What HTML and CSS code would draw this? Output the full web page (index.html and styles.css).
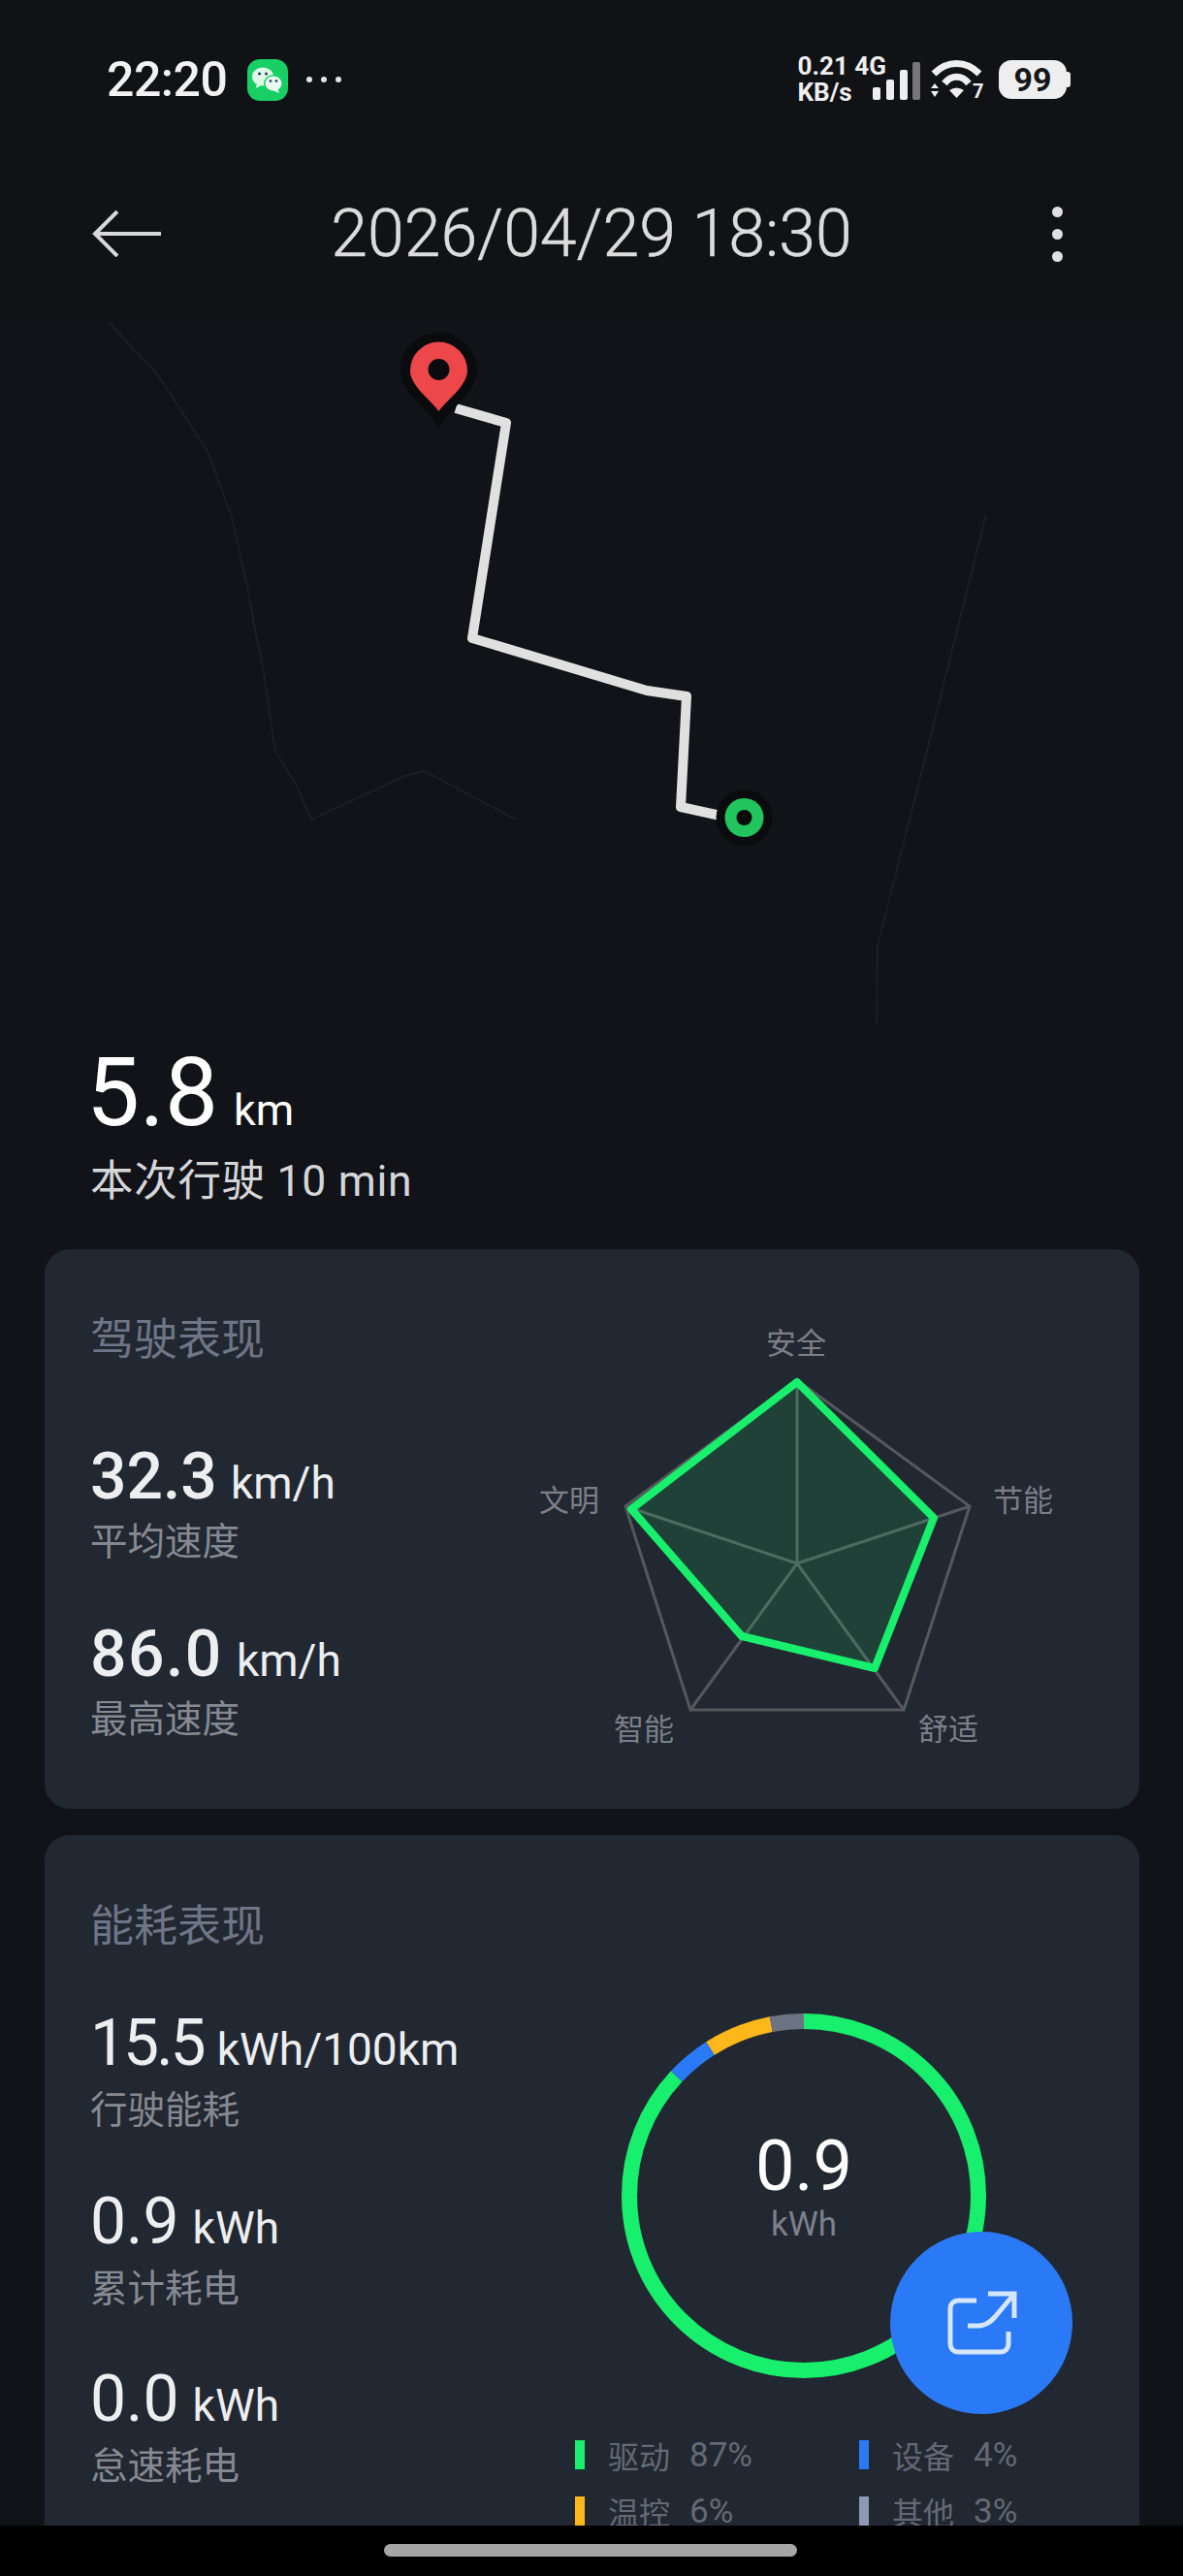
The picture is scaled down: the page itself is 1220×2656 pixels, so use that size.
FILE: index.html
```html
<!DOCTYPE html>
<html lang="zh-CN">
<head>
    <meta charset="UTF-8">
    <meta name="viewport" content="width=device-width, initial-scale=1.0">
    <title>行程详情</title>
    <link rel="stylesheet" href="styles.css">
</head>
<body>
    <div id="screen">
        <div class="status-bar">
            <div class="status-left">
                <span class="clock">22:20</span>
                <svg class="wechat" viewBox="0 0 42 43">
                    <rect width="42" height="43" rx="13" fill="#17cf65"/>
                    <ellipse cx="16" cy="18" rx="11" ry="9.5" fill="#dff8e6"/>
                    <path d="M10 24 L9 30 L16 26Z" fill="#dff8e6"/>
                    <ellipse cx="27" cy="25" rx="10" ry="9" fill="#17cf65"/>
                    <ellipse cx="27" cy="25" rx="8.5" ry="7.5" fill="#e9fbee"/>
                    <path d="M31 30 L33 35 L26 32Z" fill="#e9fbee"/>
                    <circle cx="12.5" cy="15" r="1.5" fill="#235"/>
                    <circle cx="19.5" cy="15" r="1.5" fill="#235"/>
                    <circle cx="24" cy="22.5" r="1.3" fill="#235"/>
                    <circle cx="30" cy="22.5" r="1.3" fill="#235"/>
                </svg>
                <span class="more-dots"><i></i><i></i><i></i></span>
            </div>
            <div class="status-right">
                <div class="net">0.21 4G<br>KB/s</div>
                <svg class="signal" viewBox="0 0 50 39">
                    <rect x="0" y="26" width="8" height="13" rx="2" fill="#eee"/>
                    <rect x="14" y="18" width="8" height="21" rx="2" fill="#eee"/>
                    <rect x="28" y="8" width="8" height="31" rx="2" fill="#eee"/>
                    <rect x="41" y="0" width="8" height="39" rx="2" fill="#777"/>
                </svg>
                <svg class="wifi" viewBox="0 -4 56 48">
                    <path d="M3 14 C17 0 36 0 50 14" fill="none" stroke="#eee" stroke-width="7"/>
                    <path d="M14 24 C21 15 32 15 39 24" fill="none" stroke="#eee" stroke-width="7"/>
                    <path d="M19 31 Q26.500 26 34 31 L26.500 39Z" fill="#eee"/>
                    <path d="M0 29 L4 24 L8 29Z M0 32 H8 L4 38Z" fill="#eee"/>
                    <text x="43" y="39" class="wifi-num">7</text>
                </svg>
                <div class="battery">99</div>
            </div>
        </div>

        <div class="top-bar">
            <svg class="back" viewBox="0 0 71 48">
                <path d="M71 24 H3 M26 1 L3 24 L26 47" fill="none" stroke="#d8d8d8" stroke-width="4"/>
            </svg>
            <div class="top-title">2026/04/29 18:30</div>
            <div class="menu-dots"><i></i><i></i><i></i></div>
        </div>

        <svg class="map" viewBox="0 332 1220 745">
            <path class="road" d="M112 332 L163 387 L214 465 L239 533 L255 605 L265 660 L268 670 L272 694 L283 768 L284 775 L306 810 L321 845 L418 800 L438 795 L532 845"/>
            <path class="road" d="M1017 530 L957 770 L905 975 L904 1056"/>
            <path class="route" d="M470 421 L522 436 L487 658 L667 712 L708 718 L702 832 L743 841"/>
            <path class="pin" d="M452.500 424 C445 413 423 398 423 382 A29.500 29.500 0 0 1 482 382 C482 398 460 413 452.500 424Z"/>
            <circle cx="452.500" cy="381" r="11" fill="#0a0b0d"/>
            <circle cx="767.500" cy="843" r="29" fill="#0a0b0d"/>
            <circle cx="767.500" cy="843" r="20" fill="#22c45e"/>
            <circle cx="767.500" cy="843" r="8" fill="#0a0b0d"/>
        </svg>

        <div class="summary">
            <div class="distance">5.8<span class="unit">km</span></div>
            <div class="duration">本次行驶 10 min</div>
        </div>

        <div class="card">
            <div class="col-left">
                <div class="card-title">驾驶表现</div>
                <div class="stats drive-stats">
                    <div class="stat">
                        <div class="value medium">32.3<span class="unit">km/h</span></div>
                        <div class="label">平均速度</div>
                    </div>
                    <div class="stat">
                        <div class="value medium"><span class="wide">86.0</span><span class="unit">km/h</span></div>
                        <div class="label">最高速度</div>
                    </div>
                </div>
            </div>
            <svg class="radar" viewBox="530 1352 600 460">
                <g class="radar-grid">
                    <path d="M822 1423 L1000 1553 L932 1763 L712 1763 L645 1553Z"/>
                    <path d="M822 1612 L822 1423 M822 1612 L1000 1553 M822 1612 L932 1763 M822 1612 L712 1763 M822 1612 L645 1553"/>
                </g>
                <path class="radar-value" d="M822 1425 L963 1565 L902 1720 L765 1687 L651 1556Z"/>
                <g class="radar-label">
                    <text x="821" y="1396">安全</text>
                    <text x="1055" y="1558">节能</text>
                    <text x="978" y="1794">舒适</text>
                    <text x="664" y="1794">智能</text>
                    <text x="587" y="1558">文明</text>
                </g>
            </svg>
        </div>

        <div class="card energy">
            <div class="col-left">
                <div class="card-title">能耗表现</div>
                <div class="stats energy-stats">
                    <div class="stat">
                        <div class="value"><span class="tight">15.5</span><span class="unit">kWh/100km</span></div>
                        <div class="label">行驶能耗</div>
                    </div>
                    <div class="stat">
                        <div class="value">0.9<span class="unit">kWh</span></div>
                        <div class="label">累计耗电</div>
                    </div>
                    <div class="stat">
                        <div class="value">0.0<span class="unit">kWh</span></div>
                        <div class="label">怠速耗电</div>
                    </div>
                </div>
            </div>
            <div class="col-right">
                <svg class="donut" viewBox="0 0 376 376">
                    <g fill="none" stroke-width="16" transform="rotate(-90 188 188)">
                        <circle cx="188" cy="188" r="180" pathLength="100" stroke="#18ef6c" stroke-dasharray="87 13"/>
                        <circle cx="188" cy="188" r="180" pathLength="100" stroke="#2a79f6" stroke-dasharray="4 96" stroke-dashoffset="-87"/>
                        <circle cx="188" cy="188" r="180" pathLength="100" stroke="#fdb71a" stroke-dasharray="6 94" stroke-dashoffset="-91"/>
                        <circle cx="188" cy="188" r="180" pathLength="100" stroke="#6b7483" stroke-dasharray="3 97" stroke-dashoffset="-97"/>
                    </g>
                    <text class="donut-num" x="188" y="182">0.9</text>
                    <text class="donut-unit" x="188" y="229">kWh</text>
                </svg>
                <div class="legend">
                    <div class="legend-item"><i class="green"></i><span>驱动</span><span class="pct">87%</span></div>
                    <div class="legend-item"><i class="blue"></i><span>设备</span><span class="pct">4%</span></div>
                    <div class="legend-item"><i class="amber"></i><span>温控</span><span class="pct">6%</span></div>
                    <div class="legend-item"><i class="grey"></i><span>其他</span><span class="pct">3%</span></div>
                </div>
            </div>
        </div>

        <div class="fab">
            <svg viewBox="0 0 188 188" fill="none" stroke="#d6e6ff" stroke-width="5">
                <path d="M89 71 H70 a8 8 0 0 0 -8 8 V116 a8 8 0 0 0 8 8 H114 a8 8 0 0 0 8 -8 V103"/>
                <path d="M101 64 H128 V89"/>
                <path d="M128 64 L108 88 Q101 96 92 97 H80"/>
            </svg>
        </div>

        <div class="nav-bar"><div class="handle"></div></div>
    </div>
</body>
</html>
```

FILE: styles.css
```css
body {
    margin: 0;
    background: #111318;
    font-family: 'Roboto', 'Noto Sans CJK SC', sans-serif;
    color: #fff;
}
#screen {
    position: relative;
    width: 1220px;
    height: 2656px;
    overflow: hidden;
    background: #111318;
}
.status-bar {
    display: flex;
    justify-content: space-between;
    align-items: center;
    height: 164px;
    padding: 0 116px 0 110px;
    box-sizing: border-box;
    background: #101216;
}
.status-left, .status-right {
    display: flex;
    align-items: center;
}
.clock {
    font-size: 50px;
    font-weight: 500;
    color: #f2f2f2;
    letter-spacing: -0.5px;
}
.wechat {
    width: 42px;
    height: 43px;
    margin-left: 21px;
}
.more-dots {
    display: flex;
    gap: 9px;
    margin-left: 19px;
}
.more-dots i {
    width: 6px;
    height: 6px;
    border-radius: 50%;
    background: #e4e4e4;
}
.net {
    font-size: 26px;
    font-weight: 700;
    line-height: 27px;
    color: #eee;
    white-space: nowrap;
}
.signal {
    width: 50px;
    height: 39px;
    margin-left: -14px;
    margin-top: 2px;
}
.wifi {
    width: 56px;
    height: 48px;
    margin-left: 10px;
}
.wifi-num {
    font-size: 20px;
    font-weight: 700;
    fill: #eee;
}
.battery {
    position: relative;
    width: 70px;
    height: 40px;
    margin-left: 14px;
    margin-right: 4px;
    border-radius: 13px;
    background: #eee;
    color: #14161a;
    font-size: 34px;
    font-weight: 700;
    line-height: 40px;
    text-align: center;
}
.battery::after {
    content: "";
    position: absolute;
    left: 70px;
    top: 12px;
    width: 4px;
    height: 16px;
    border-radius: 0 3px 3px 0;
    background: #eee;
}
.top-bar {
    display: grid;
    grid-template-columns: 1fr auto 1fr;
    align-items: center;
    height: 168px;
    padding: 0 95px 14px 95px;
    box-sizing: border-box;
    background: #101216;
}
.back {
    width: 71px;
    height: 48px;
}
.top-title {
    font-size: 68px;
    font-weight: 300;
    color: #dcdcdc;
    white-space: nowrap;
    -webkit-text-stroke: 0.5px #dcdcdc;
}
.menu-dots {
    justify-self: end;
    display: flex;
    flex-direction: column;
    gap: 12px;
    margin-right: 29px;
}
.menu-dots i {
    width: 11px;
    height: 11px;
    border-radius: 50%;
    background: #e0e0e0;
}
.map {
    display: block;
    width: 1220px;
    height: 745px;
}
.road {
    fill: none;
    stroke: #1b1e23;
    stroke-width: 2;
}
.route {
    fill: none;
    stroke: #e0e0e0;
    stroke-width: 10;
    stroke-linejoin: round;
}
.pin {
    fill: #ee474a;
    stroke: #0a0b0d;
    stroke-width: 20;
    paint-order: stroke;
}
.summary {
    padding-left: 89px;
    height: 211px;
}
.distance {
    font-size: 98px;
    line-height: 100px;
    font-weight: 400;
}
.distance .unit {
    font-size: 45px;
    line-height: 1;
    margin-left: 16px;
}
.duration {
    margin-top: 13px;
    padding-left: 4px;
    font-size: 44.500px;
    line-height: 56px;
    font-weight: 400;
    letter-spacing: 0.7px;
    color: #d5d6d8;
}
.card {
    display: flex;
    margin: 0 45px 27px 46px;
    height: 577px;
    padding: 64px 0 0 47px;
    box-sizing: border-box;
    border-radius: 26px;
    background: #222831;
}
.energy {
    height: 800px;
    margin-bottom: 0;
    padding-top: 65px;
}
.col-left {
    flex: 0 0 437px;
}
.card-title {
    font-size: 45px;
    line-height: 60px;
    color: #6e7587;
}
.drive-stats {
    margin-top: 73px;
    display: flex;
    flex-direction: column;
    gap: 53px;
}
.drive-stats .label {
    margin-top: 4px;
}
.drive-stats .unit {
    font-size: 45px;
    margin-left: 12px;
}
.energy-stats {
    margin-top: 52px;
    display: flex;
    flex-direction: column;
    gap: 51.500px;
}
.value {
    font-size: 66px;
    line-height: 76px;
    font-weight: 400;
    color: #eceef0;
    white-space: nowrap;
}
.value.medium {
    font-weight: 500;
}
.value .unit {
    font-size: 46px;
    line-height: 1;
    font-weight: 400;
    margin-left: 14px;
}
.value .tight {
    letter-spacing: -3px;
}
.value .wide {
    letter-spacing: 1.500px;
}
.label {
    margin-top: 6px;
    font-size: 38.500px;
    line-height: 50px;
    color: #858a92;
}
.radar {
    width: 600px;
    height: 460px;
    flex: none;
}
.radar-grid {
    fill: none;
    stroke: #55585d;
    stroke-width: 3;
}
.radar-value {
    fill: rgba(24, 239, 108, 0.13);
    stroke: #18ef6c;
    stroke-width: 8;
    stroke-linejoin: round;
}
.radar-label text {
    font-size: 31px;
    fill: #7b7f88;
    text-anchor: middle;
}
.col-right {
    flex: none;
}
.donut {
    display: block;
    width: 376px;
    height: 376px;
    margin: 119px 0 0 111px;
}
.donut-num {
    font-size: 72px;
    font-weight: 400;
    fill: #fff;
    text-anchor: middle;
}
.donut-unit {
    font-size: 35px;
    fill: #7b808c;
    text-anchor: middle;
}
.legend {
    display: grid;
    grid-template-columns: 293px 292px;
    margin: 50px 0 0 63px;
}
.legend-item {
    display: flex;
    align-items: center;
    height: 58px;
    font-size: 32px;
    color: #636975;
}
.legend-item i {
    width: 10px;
    height: 30px;
    margin-right: 24px;
}
.legend-item .pct {
    margin-left: 20px;
    font-size: 35px;
}
.green { background: #18ef6c; }
.blue { background: #2a79f6; }
.amber { background: #fdb71a; }
.grey { background: #8d99b5; }
.fab {
    position: absolute;
    left: 918px;
    top: 2301px;
    width: 188px;
    height: 188px;
    border-radius: 50%;
    background: #2a79f6;
}
.fab svg {
    display: block;
}
.nav-bar {
    position: absolute;
    left: 0;
    right: 0;
    bottom: 0;
    height: 52px;
    background: #000;
}
.handle {
    width: 426px;
    height: 13px;
    margin: 19px 0 0 396px;
    border-radius: 7px;
    background: #a6a6a6;
}
```
